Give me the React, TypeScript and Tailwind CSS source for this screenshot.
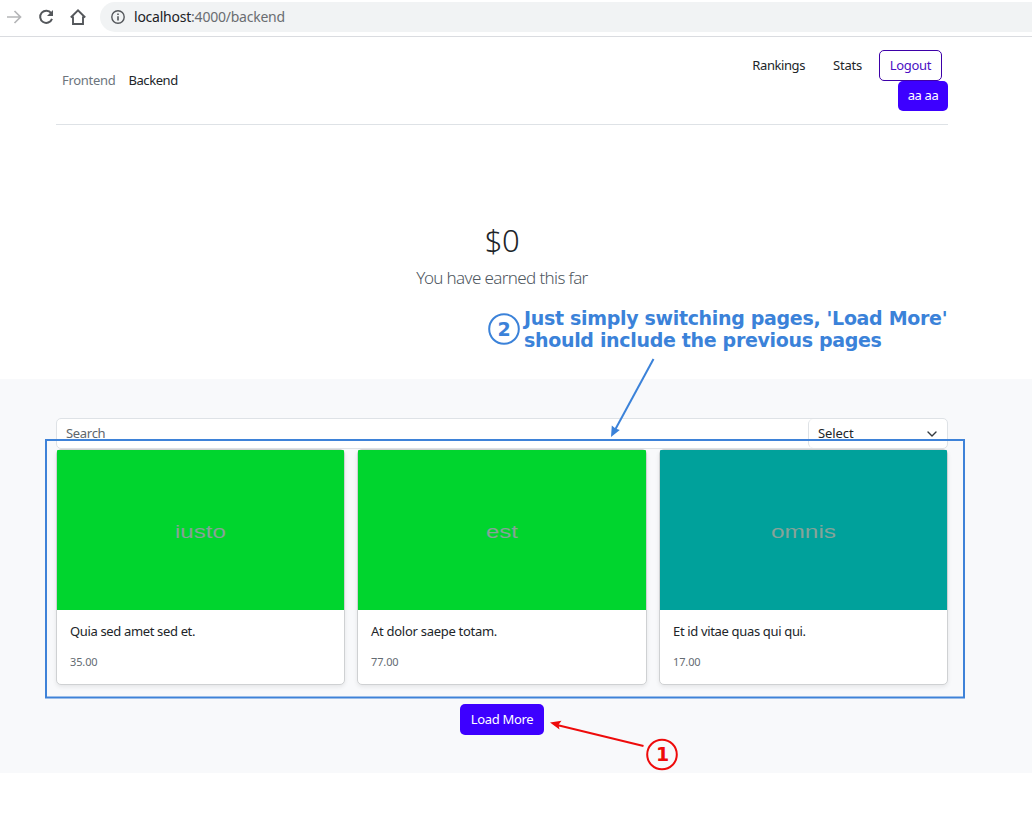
import type { ReactNode } from 'react';

type Product = {
  caption: string;
  captionSize: string;
  title: string;
  titleSpacing: string;
  price: string;
  color: string;
};

const products: Product[] = [
  { caption: 'iusto', captionSize: 'w-[51px]', title: 'Quia sed amet sed et.', titleSpacing: 'tracking-[-0.35px]', price: '35.00', color: 'bg-[#00d52e]' },
  { caption: 'est', captionSize: 'w-[32px]', title: 'At dolor saepe totam.', titleSpacing: 'tracking-[-0.28px]', price: '77.00', color: 'bg-[#00d52e]' },
  { caption: 'omnis', captionSize: 'w-[65px]', title: 'Et id vitae quas qui qui.', titleSpacing: 'tracking-[-0.34px]', price: '17.00', color: 'bg-[#00a19b]' },
];

function BrowserBar() {
  return (
    <div className="flex h-[37px] items-start border-b border-[#dadce0] bg-white">
      <svg className="h-[36px] w-[100px] shrink-0" viewBox="0 0 100 36" fill="none">
        <path d="M7 17H20M14.5 11L20.5 17L14.5 23" stroke="#b5b6b8" strokeWidth="1.7" />
        <path d="M51.2 13.2A6.1 6.1 0 1 0 52 18.9" stroke="#54575b" strokeWidth="2" />
        <path d="M53 10V16H47Z" fill="#54575b" />
        <path d="M70.8 17.5L78 10.3L85.2 17.5M73 16.5V24H83V16.5" stroke="#54575b" strokeWidth="1.9" />
      </svg>
      <div className="mt-[2px] flex h-[30px] flex-1 items-center rounded-l-full bg-[#f1f3f4] pl-[11px]">
        <svg className="h-[14px] w-[14px]" viewBox="0 0 14 14" fill="none">
          <circle cx="7" cy="7" r="6.2" stroke="#54575b" strokeWidth="1.4" />
          <path d="M7 6.2V10.5M7 3.5V5" stroke="#54575b" strokeWidth="1.6" />
        </svg>
        <span className="ml-[9px] text-[14px] tracking-[-0.23px] text-[#6a6d71]">
          <span className="text-[#202124]">localhost</span>:4000/backend
        </span>
      </div>
    </div>
  );
}

function Header() {
  return (
    <header className="mr-[84px] ml-[56px] flex h-[88px] justify-between border-b border-[#dee2e6]">
      <nav className="flex items-center gap-[13px] pb-[2px] pl-[6px]">
        <span className="tracking-[-0.3px] text-[#6c757d]">Frontend</span>
        <span className="tracking-[-0.42px] text-[#212529]">Backend</span>
      </nav>
      <div className="flex flex-col items-end pt-[13px]">
        <div className="mr-[6px] flex items-center">
          <span className="mr-[28px] pb-[2px] tracking-[-0.42px]">Rankings</span>
          <span className="mr-[17px] pb-[2px] tracking-[-0.2px]">Stats</span>
          <button className="flex h-[31px] w-[63px] items-center justify-center rounded-[5px] border border-[#3d00a8] bg-white pb-[2px] tracking-[-0.3px] text-[#4a0fc4]">
            Logout
          </button>
        </div>
        <button className="flex h-[30px] w-[50px] items-center justify-center rounded-[5px] bg-[#3d00ff] pb-[2px] tracking-[-0.4px] text-white">
          aa aa
        </button>
      </div>
    </header>
  );
}

function ProductCard({ product }: { product: Product }) {
  return (
    <article className="flex h-[236px] flex-col rounded-[5px] border border-[#cfd1d3] bg-white shadow-[0_2px_4px_rgba(0,0,0,0.08)]">
      <div className={`flex h-[160px] shrink-0 items-center justify-center rounded-t-[1px] pt-[4px] ${product.color}`}>
        <svg className={`h-[24px] overflow-visible ${product.captionSize}`}>
          <text x="0" y="18" textLength="100%" lengthAdjust="spacingAndGlyphs" fontSize="17.5" fontFamily="Liberation Sans, sans-serif" fill="#86a399">
            {product.caption}
          </text>
        </svg>
      </div>
      <div className="px-[13px] pt-[11px]">
        <h2 className={`leading-[20px] ${product.titleSpacing}`}>{product.title}</h2>
        <p className="mt-[12px] text-[11px] leading-[18px] tracking-[-0.12px] text-[#646b72]">{product.price}</p>
      </div>
    </article>
  );
}

function Note({ children }: { children: ReactNode }) {
  return (
    <p className="absolute top-[307px] left-[524px] font-['DejaVu_Sans',sans-serif] text-[19px] leading-[22px] font-bold tracking-[-0.32px] whitespace-nowrap text-[#3b82d9]">
      {children}
    </p>
  );
}

function Annotations() {
  return (
    <div className="pointer-events-none absolute inset-0">
      <Note>
        Just simply switching pages, 'Load More'
        <br />
        should include the previous pages
      </Note>
      <svg className="absolute inset-0 h-full w-full" viewBox="0 0 1032 825" fill="none">
        <rect x="46" y="440" width="918" height="257.5" stroke="#3e82d8" strokeWidth="2" />
        <g fontFamily="DejaVu Sans, sans-serif" fontWeight="700" fontSize="19" textAnchor="middle">
          <circle cx="504" cy="329" r="14.8" stroke="#3b82d9" strokeWidth="2" />
          <text x="504" y="336" fill="#3b82d9">2</text>
          <circle cx="662" cy="754.5" r="14.8" stroke="#ee0b0b" strokeWidth="2" />
          <text x="662.5" y="761" fill="#ee0b0b">1</text>
        </g>
        <path d="M653.5 359L615.5 429" stroke="#3b82d9" strokeWidth="2" />
        <path d="M611 437L611.8 425.5L615.5 428.5L619.8 430Z" fill="#3b82d9" />
        <path d="M643.5 746L557 725" stroke="#ee0b0b" strokeWidth="2" />
        <path d="M550 722.5L561.5 720.8L558.5 724.8L559.5 729.5Z" fill="#ee0b0b" />
      </svg>
    </div>
  );
}

export default function App() {
  return (
    <div className="relative h-[825px] w-[1032px] overflow-hidden bg-white font-['Noto_Sans',sans-serif] text-[13px] leading-[20px] text-[#212529]">
      <BrowserBar />
      <Header />
      <section className="mr-[28px] flex h-[254px] flex-col items-center pt-[96px]">
        <h1 className="text-[31px] leading-[38px] font-[350] tracking-[-0.5px]">$0</h1>
        <p className="mt-[6px] text-[17px] leading-[26px] font-light tracking-[-0.63px] text-[#50585f]">You have earned this far</p>
      </section>
      <main className="h-[394px] bg-[#f8f9fb] pt-[39px] pr-[84px] pl-[56px]">
        <div className="flex h-[31px] rounded-[5px] border border-[#dee2e6] bg-white">
          <div className="flex flex-1 items-center pb-[2px] pl-[9px] tracking-[-0.3px] text-[#60666c]">Search</div>
          <div className="flex w-[139px] items-center justify-between rounded-[5px] border-l border-[#dee2e6] pr-[10px] pb-[2px] pl-[9px] tracking-[-0.1px]">
            Select
            <svg className="mt-[2px] h-[10px] w-[10px]" viewBox="0 0 10 10" fill="none">
              <path d="M1 3L5 7L9 3" stroke="#343a40" strokeWidth="1.4" strokeLinecap="round" strokeLinejoin="round" />
            </svg>
          </div>
        </div>
        <div className="grid grid-cols-[289px_290px_289px] gap-[12px]">
          {products.map((product) => (
            <ProductCard key={product.title} product={product} />
          ))}
        </div>
        <div className="mt-[19px] flex justify-center">
          <button className="flex h-[31px] w-[84px] items-center justify-center rounded-[5px] bg-[#3d00ff] pb-[2px] tracking-[-0.34px] text-white">
            Load More
          </button>
        </div>
      </main>
      <Annotations />
    </div>
  );
}
